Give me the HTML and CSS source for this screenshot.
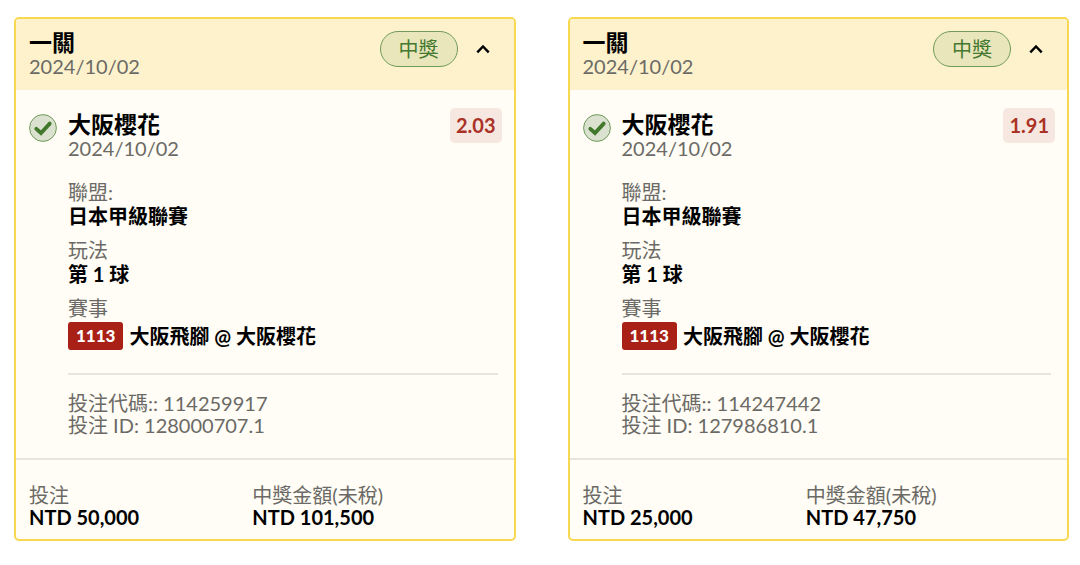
FILE: index.html
```html
<!DOCTYPE html>
<html lang="zh-Hant">
<head>
    <meta charset="UTF-8">
    <meta name="viewport" content="width=device-width, initial-scale=1.0">
    <title>投注紀錄</title>
    <link rel="stylesheet" href="styles.css">
</head>
<body>
    <main class="tickets">
        <article class="ticket">
            <header class="ticket-header">
                <div class="heading">
                    <h2>一關</h2>
                    <time datetime="2024-10-02">2024/10/02</time>
                </div>
                <div class="actions">
                    <span class="status">中獎</span>
                    <button class="toggle" type="button" aria-label="收合" aria-expanded="true">
                        <svg width="14" height="10" viewBox="0 0 14 10"><path d="M1.3 8.3 L7 2.4 L12.7 8.3"/></svg>
                    </button>
                </div>
            </header>

            <section class="bet">
                <svg class="check" width="28" height="28" viewBox="0 0 28 28">
                    <circle cx="14" cy="14" r="13.4"/>
                    <path d="M7.3 14.8 L12 19 L20.7 9.6"/>
                </svg>
                <div class="bet-content">
                    <div class="bet-top">
                        <div class="heading">
                            <h3>大阪櫻花</h3>
                            <time datetime="2024-10-02">2024/10/02</time>
                        </div>
                        <span class="odds">2.03</span>
                    </div>
                    <dl class="details">
                        <dt>聯盟:</dt>
                        <dd>日本甲級聯賽</dd>
                        <dt>玩法</dt>
                        <dd>第 1 球</dd>
                        <dt>賽事</dt>
                        <dd class="match"><span class="code">1113</span>大阪飛腳 @ 大阪櫻花</dd>
                    </dl>
                    <div class="ids">
                        <p>投注代碼:: 114259917</p>
                        <p>投注 ID: 128000707.1</p>
                    </div>
                </div>
            </section>

            <dl class="totals">
                <div>
                    <dt>投注</dt>
                    <dd>NTD 50,000</dd>
                </div>
                <div>
                    <dt>中獎金額(未稅)</dt>
                    <dd>NTD 101,500</dd>
                </div>
            </dl>
        </article>

        <article class="ticket">
            <header class="ticket-header">
                <div class="heading">
                    <h2>一關</h2>
                    <time datetime="2024-10-02">2024/10/02</time>
                </div>
                <div class="actions">
                    <span class="status">中獎</span>
                    <button class="toggle" type="button" aria-label="收合" aria-expanded="true">
                        <svg width="14" height="10" viewBox="0 0 14 10"><path d="M1.3 8.3 L7 2.4 L12.7 8.3"/></svg>
                    </button>
                </div>
            </header>

            <section class="bet">
                <svg class="check" width="28" height="28" viewBox="0 0 28 28">
                    <circle cx="14" cy="14" r="13.4"/>
                    <path d="M7.3 14.8 L12 19 L20.7 9.6"/>
                </svg>
                <div class="bet-content">
                    <div class="bet-top">
                        <div class="heading">
                            <h3>大阪櫻花</h3>
                            <time datetime="2024-10-02">2024/10/02</time>
                        </div>
                        <span class="odds">1.91</span>
                    </div>
                    <dl class="details">
                        <dt>聯盟:</dt>
                        <dd>日本甲級聯賽</dd>
                        <dt>玩法</dt>
                        <dd>第 1 球</dd>
                        <dt>賽事</dt>
                        <dd class="match"><span class="code">1113</span>大阪飛腳 @ 大阪櫻花</dd>
                    </dl>
                    <div class="ids">
                        <p>投注代碼:: 114247442</p>
                        <p>投注 ID: 127986810.1</p>
                    </div>
                </div>
            </section>

            <dl class="totals">
                <div>
                    <dt>投注</dt>
                    <dd>NTD 25,000</dd>
                </div>
                <div>
                    <dt>中獎金額(未稅)</dt>
                    <dd>NTD 47,750</dd>
                </div>
            </dl>
        </article>
    </main>

    <script>
        // Abrir y cerrar cada boleto
        document.querySelectorAll(".toggle").forEach(function (boton) {
            boton.addEventListener("click", function () {
                let cerrado = boton.closest(".ticket").classList.toggle("closed");
                boton.setAttribute("aria-expanded", !cerrado);
            });
        });
    </script>
</body>
</html>
```
FILE: styles.css
```css
* {
    box-sizing: border-box;
}
body {
    margin: 0;
    padding: 17px 11px 24px 14px;
    background: #fff;
    color: #000;
    font-family: Lato, "Noto Sans CJK TC", sans-serif;
    font-size: 20px;
    line-height: 22px;
}
h2, h3, p, dl, dd {
    margin: 0;
}
h2, h3 {
    font-size: 23px;
    line-height: 24px;
    font-weight: bold;
}
time, dt {
    display: block;
    color: #6b6a66;
}
time {
    line-height: 24px;
}
dd {
    font-weight: bold;
}
.tickets {
    display: grid;
    grid-template-columns: 1fr 1fr;
    gap: 52px;
    align-items: start;
}
.ticket {
    border: 2px solid #f8d850;
    border-radius: 5px;
    background: #fffdf5;
    overflow: hidden;
}
.ticket-header {
    display: flex;
    align-items: flex-start;
    padding: 11px 12px 12px 13px;
    background: #fdf2cc;
}
.heading {
    flex: 1;
}
.actions {
    display: flex;
    align-items: center;
    gap: 6px;
    padding-top: 1px;
}
.status {
    padding: 0 18px;
    border: 1px solid #6f9a5b;
    border-radius: 18px;
    background: #e9e6bb;
    color: #44782f;
    line-height: 34px;
}
.toggle {
    display: flex;
    align-items: center;
    justify-content: center;
    width: 38px;
    height: 36px;
    padding: 0;
    border: none;
    background: none;
    cursor: pointer;
}
.toggle path {
    fill: none;
    stroke: #000;
    stroke-width: 2.4;
}
.closed .toggle svg {
    transform: rotate(180deg);
}
.closed .bet {
    display: none;
}
.bet {
    display: flex;
    gap: 11px;
    padding: 18px 12px 22px 13px;
}
.check {
    flex: none;
    margin-top: 6px;
}
.check circle {
    fill: #dae2cf;
    stroke: #6f9a5b;
    stroke-width: 1;
}
.check path {
    fill: none;
    stroke: #41782b;
    stroke-width: 3.8;
    stroke-linecap: round;
}
.bet-content {
    flex: 1;
}
.bet-top {
    display: flex;
    align-items: flex-start;
}
.bet-top .heading {
    padding-top: 4px;
}
.odds {
    padding: 0 6px;
    border-radius: 5px;
    background: #f6e8e1;
    color: #ab3226;
    font-weight: bold;
    line-height: 35px;
}
.details {
    margin-top: 20px;
    line-height: 24px;
}
.details dd + dt {
    margin-top: 10px;
}
.match {
    display: flex;
    align-items: center;
    gap: 6px;
    padding-top: 2px;
}
.code {
    padding: 0 8px;
    border-radius: 3px;
    background: #a92017;
    color: #fff;
    font-size: 17px;
    font-weight: 900;
    line-height: 28px;
}
.ids {
    margin: 23px 4px 0 0;
    padding-top: 17px;
    border-top: 2px solid #e8e5de;
    color: #6b6a66;
}
.totals {
    display: grid;
    grid-template-columns: 9fr 10fr;
    padding: 24px 13px 11px;
    border-top: 2px solid #e8e5de;
}
```
